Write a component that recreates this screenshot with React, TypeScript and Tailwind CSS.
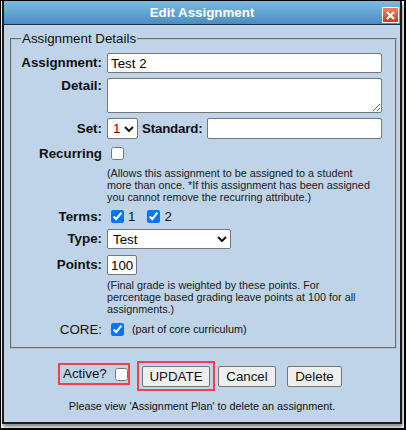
function Chevron() {
  return (
    <svg width="10" height="6" viewBox="0 0 10 6">
      <path d="M1 1 L5 5 L9 1" fill="none" stroke="#111" strokeWidth="2" />
    </svg>
  );
}

export default function App() {
  return (
    <div className="h-[430px] w-[406px] overflow-hidden border-t border-l border-r-2 border-b-2 border-black bg-white font-['Liberation_Sans',Arial,sans-serif] text-[13.333px] text-[#111]">
      <div className="ml-[1px] flex h-[423px] w-[400px] flex-col border-x-2 border-b-2 border-[#1c1c1c] bg-[#bfd4e8] shadow-[1px_3px_3px_rgba(0,0,0,0.45)]">
        <div className="relative flex h-[24px] shrink-0 items-center justify-center border-b border-[#1f3347] bg-gradient-to-b from-[#7bbbe2] to-[#4a8dc2] pt-[1px]">
          <span className="font-bold text-white">Edit Assignment</span>
          <div className="absolute right-[1px] top-[6px] flex h-[16px] w-[17px] items-center justify-center border border-white bg-gradient-to-b from-[#f2815f] to-[#cc3a1b]">
            <svg width="9" height="9" viewBox="0 0 9 9">
              <path d="M1 1 L8 8 M8 1 L1 8" stroke="white" strokeWidth="2.2" />
            </svg>
          </div>
        </div>

        <fieldset className="ml-[6px] mr-[3px] mt-[6px] border-2 border-[#c0c0c0] [border-style:groove] pb-[11px] pt-[7px]">
          <legend className="ml-[9px] px-[1px] leading-[15px]">Assignment Details</legend>

          <div className="flex h-[20px] items-center gap-[5px]">
            <label className="w-[90px] text-right font-bold">Assignment:</label>
            <input
              defaultValue="Test 2"
              className="h-[20px] w-[275px] rounded-[2px] border border-[#767676] bg-white px-[3px] text-[#000]"
            />
          </div>

          <div className="mt-[5px] flex gap-[5px]">
            <label className="w-[90px] text-right font-bold leading-[15px]">Detail:</label>
            <textarea className="h-[35px] w-[275px] rounded-[2px] border border-[#767676] bg-white" />
          </div>

          <div className="mt-[5px] flex h-[21px] w-[370px] items-center">
            <label className="mr-[5px] w-[90px] text-right font-bold">Set:</label>
            <div className="relative h-[21px] w-[31px]">
              <select className="h-full w-full appearance-none rounded-[2px] border border-[#767676] bg-white pl-[5px] text-[#7a0000]">
                <option>1</option>
              </select>
              <span className="pointer-events-none absolute right-[4px] top-0 flex h-full items-center">
                <Chevron />
              </span>
            </div>
            <label className="ml-[4px] font-bold tracking-[-0.2px]">Standard:</label>
            <input className="ml-[5px] h-[21px] min-w-0 flex-1 rounded-[2px] border border-[#767676] bg-white" />
          </div>

          <div className="mt-[8px] flex h-[13px] items-center">
            <label className="mr-[9px] w-[90px] text-right font-bold">Recurring</label>
            <input type="checkbox" className="h-[13px] w-[13px]" />
          </div>

          <p className="ml-[95px] mt-[7px] whitespace-nowrap text-[10.8px] leading-[12px] text-[#1a1a1a]">
            (Allows this assignment to be assigned to a student
            <br />
            more than once. *If this assignment has been assigned
            <br />
            you cannot remove the recurring attribute.)
          </p>

          <div className="mt-[7px] flex h-[13px] items-center">
            <label className="mr-[9px] w-[90px] text-right font-bold">Terms:</label>
            <input type="checkbox" defaultChecked className="h-[13px] w-[13px]" />
            <span className="ml-[4px]">1</span>
            <input type="checkbox" defaultChecked className="ml-[12px] h-[13px] w-[13px]" />
            <span className="ml-[4px]">2</span>
          </div>

          <div className="mt-[6px] flex h-[20px] items-center">
            <label className="mr-[5px] w-[90px] text-right font-bold">Type:</label>
            <div className="relative h-[20px] w-[124px]">
              <select className="h-full w-full appearance-none rounded-[2px] border border-[#767676] bg-white pl-[5px] text-[#000]">
                <option>Test</option>
              </select>
              <span className="pointer-events-none absolute right-[4px] top-0 flex h-full items-center">
                <Chevron />
              </span>
            </div>
          </div>

          <div className="mt-[6px] flex h-[20px] items-center">
            <label className="mr-[5px] w-[90px] text-right font-bold">Points:</label>
            <input
              defaultValue="100"
              className="h-[20px] w-[30px] rounded-[2px] border border-[#767676] bg-white px-[3px] text-[#000]"
            />
          </div>

          <p className="ml-[95px] mt-[4px] whitespace-nowrap text-[10.8px] leading-[12px] text-[#1a1a1a]">
            (Final grade is weighted by these points. For
            <br />
            percentage based grading leave points at 100 for all
            <br />
            assignments.)
          </p>

          <div className="mt-[8px] flex h-[13px] items-center">
            <label className="mr-[9px] w-[90px] text-right">CORE:</label>
            <input type="checkbox" defaultChecked className="h-[13px] w-[13px]" />
            <span className="ml-[8px] text-[10.8px]">(part of core curriculum)</span>
          </div>
        </fieldset>

        <div className="ml-[54px] mt-[12px] flex items-start">
          <div className="mt-[2px] flex h-[22px] w-[72px] items-center border-2 border-[#ee434c] pl-[3px]">
            <span>Active?</span>
            <input type="checkbox" className="ml-[8px] h-[13px] w-[13px]" />
          </div>
          <div className="ml-[7px] flex h-[30px] w-[78px] items-center border-2 border-[#ee434c] px-[3px]">
            <button className="h-[21px] w-[69px] rounded-[2px] border border-[#767676] bg-[#efefef]">UPDATE</button>
          </div>
          <button className="ml-[3px] mt-[5px] h-[21px] w-[58px] rounded-[2px] border border-[#767676] bg-[#efefef]">
            Cancel
          </button>
          <button className="ml-[11px] mt-[5px] h-[21px] w-[55px] rounded-[2px] border border-[#767676] bg-[#efefef]">
            Delete
          </button>
        </div>

        <p className="mt-[8px] text-center text-[10.8px] leading-[14px]">
          Please view 'Assignment Plan' to delete an assignment.
        </p>
      </div>
    </div>
  );
}
